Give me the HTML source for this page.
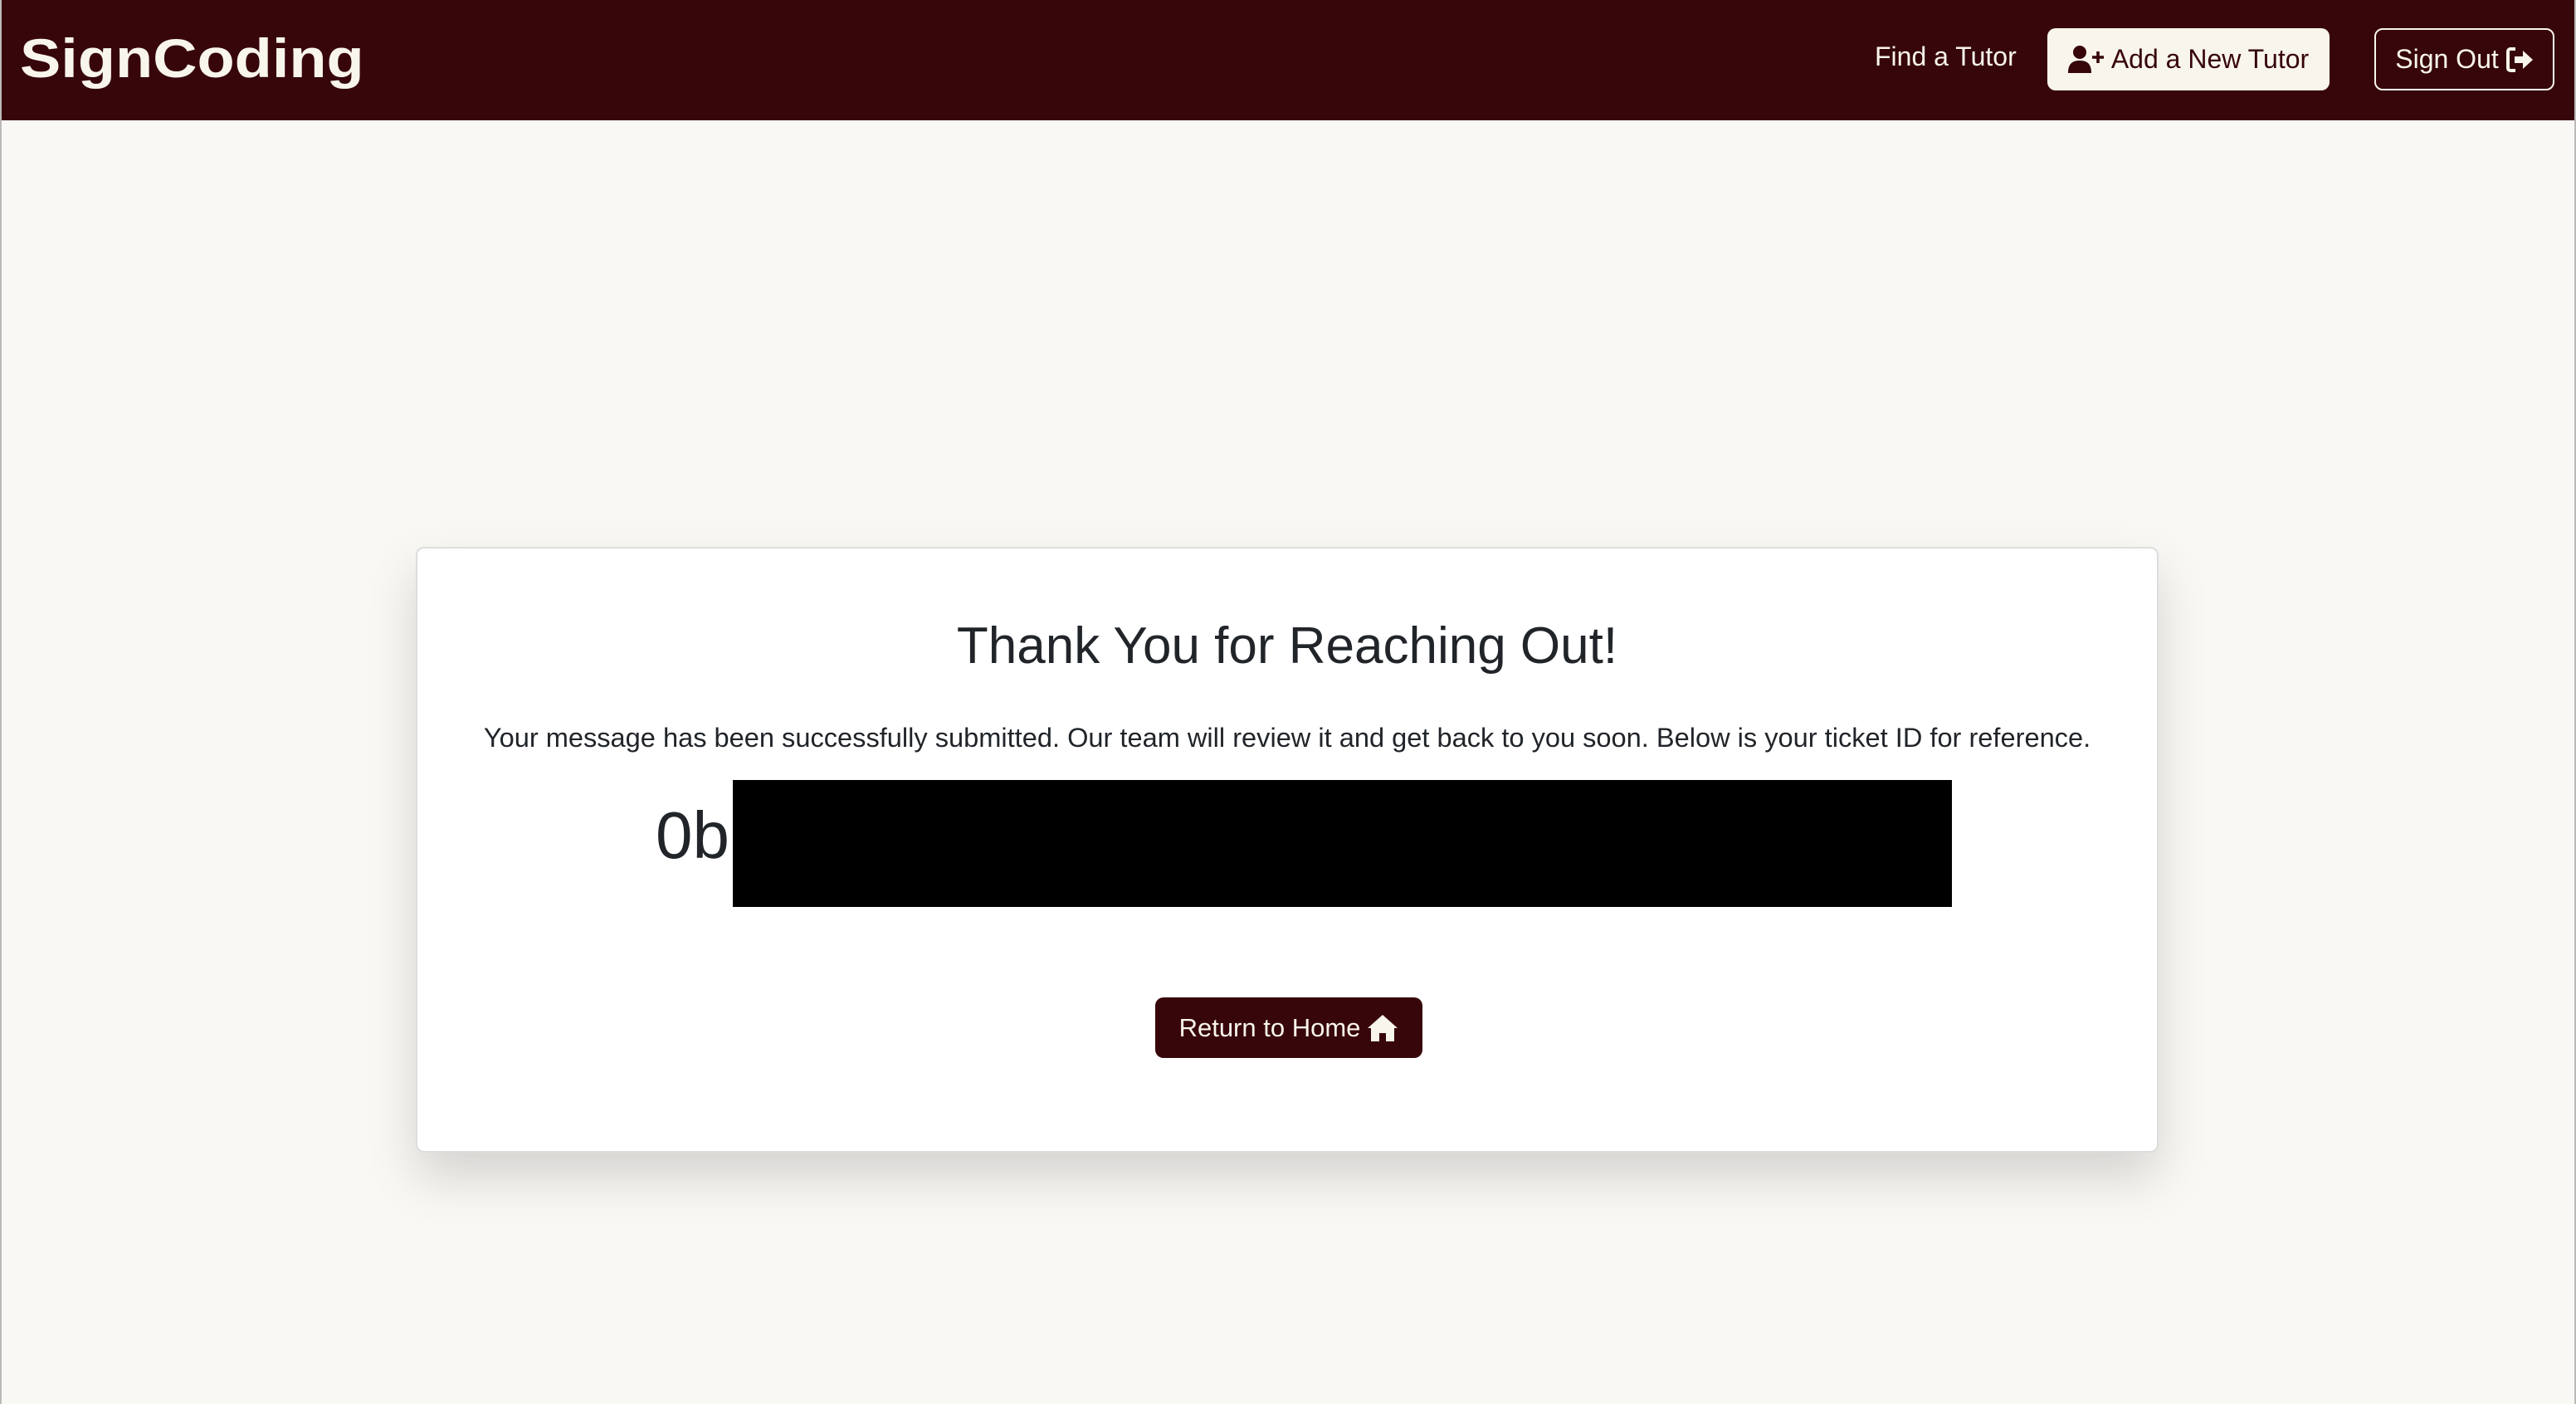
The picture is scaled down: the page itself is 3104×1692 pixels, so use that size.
<!DOCTYPE html>
<html><head><meta charset="utf-8"><style>
*{box-sizing:border-box;margin:0;padding:0}
html,body{width:3104px;height:1692px;overflow:hidden}
body{background:#f9f8f4;font-family:"Liberation Sans",sans-serif;position:relative}
.edge{position:absolute;top:0;width:2px;height:1692px;background:#bbb}
.nav{position:absolute;left:0;top:0;width:3104px;height:145px;background:#37060a}
.logo{position:absolute;left:24px;top:32px;font-size:66px;font-weight:bold;color:#f8f5ec;transform:scaleX(1.12);transform-origin:left}
.find{position:absolute;left:2259px;top:50px;font-size:32px;color:#f8f5ec}
.add{position:absolute;left:2467px;top:34px;width:340px;height:75px;background:#f8f5ec;border-radius:10px;color:#37060a;font-size:32px;display:flex;align-items:center;justify-content:center;gap:8px}
.out{position:absolute;left:2861px;top:34px;width:217px;height:75px;border:2px solid #f8f5ec;border-radius:10px;color:#f8f5ec;font-size:32px;display:flex;align-items:center;justify-content:center;gap:8px}
.card{position:absolute;left:501px;top:659px;width:2100px;height:730px;background:#fff;border:2px solid #ddd;border-radius:10px;box-shadow:0 30px 60px rgba(0,0,0,.15)}
h1{position:absolute;left:0;width:100%;top:82px;text-align:center;font-size:62px;font-weight:500;color:#212529}
.p{position:absolute;left:0;width:100%;top:209px;text-align:center;font-size:32.6px;color:#212529}
.id{position:absolute;left:287px;top:300px;font-size:80px;color:#212529;font-weight:300}
.blk{position:absolute;left:380px;top:279px;width:1469px;height:153px;background:#000}
.btn{position:absolute;left:889px;top:541px;width:322px;height:73px;background:#37060a;border-radius:10px;color:#f8f5ec;font-size:31px;display:flex;align-items:center;justify-content:center;gap:8px}
</style></head><body>
<div class="nav">
<div class="logo">SignCoding</div>
<div class="find">Find a Tutor</div>
<div class="add"><svg width="44" height="36" viewBox="0 0 44 36"><circle cx="14" cy="9" r="8" fill="#37060a"/><path d="M0 34 C0 22 6 19 14 19 C22 19 28 22 28 34 Z" fill="#37060a"/><path d="M36 8v14M29 15h14" stroke="#37060a" stroke-width="3.5"/></svg>Add a New Tutor</div>
<div class="out">Sign Out<svg width="34" height="32" viewBox="0 0 34 32"><path d="M12 3H6a3 3 0 0 0-3 3v20a3 3 0 0 0 3 3h6" stroke="#f8f5ec" stroke-width="4" fill="none"/><path d="M11 12h10V5l12 11-12 11v-7H11z" fill="#f8f5ec"/></svg></div>
</div>
<div class="edge" style="left:0"></div><div class="edge" style="right:0"></div>
<div class="card">
<h1>Thank You for Reaching Out!</h1>
<div class="p">Your message has been successfully submitted. Our team will review it and get back to you soon. Below is your ticket ID for reference.</div>
<div class="id">0b</div>
<div class="blk"></div>
<div class="btn">Return to Home<svg width="38" height="34" viewBox="0 0 38 34"><path d="M19 1 L37 17 L33 17 L33 33 L23 33 L23 23 L15 23 L15 33 L5 33 L5 17 L1 17 Z" fill="#f8f5ec"/></svg></div>
</div>
</body></html>
